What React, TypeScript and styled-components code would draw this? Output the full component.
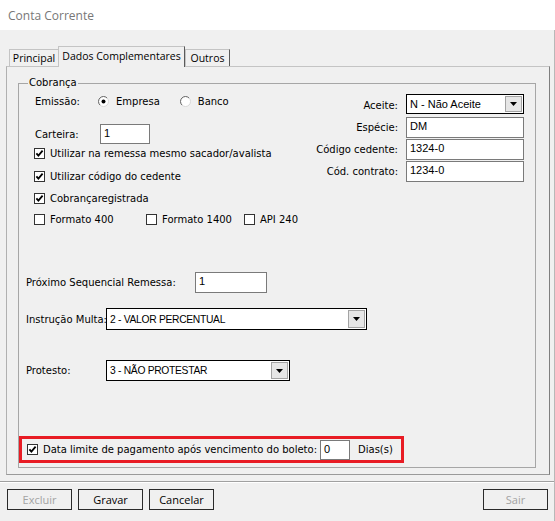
import styled, { createGlobalStyle } from "styled-components";

const GlobalStyle = createGlobalStyle`
  *, *::before, *::after { box-sizing: border-box; }
  html, body { margin: 0; padding: 0; background: #f0f0f0; }
  body {
    font-family: "DejaVu Sans", Tahoma, sans-serif;
    font-size: 10px;
    color: #000;
  }
`;

const Window = styled.div`
  width: 555px;
  height: 521px;
  display: flex;
  flex-direction: column;
  background: #f0f0f0;
  overflow: hidden;
`;

const TitleBar = styled.div`
  height: 30px;
  flex-shrink: 0;
  display: flex;
  align-items: center;
  padding-left: 8px;
  background: #fff;
  color: #777;
  font-family: "Open Sans", "Noto Sans", sans-serif;
  font-size: 12px;
`;

const Body = styled.div`
  flex: 1;
  display: flex;
  flex-direction: column;
  border-right: 1px solid #b8b8b8;
`;

const TabStrip = styled.div`
  display: flex;
  align-items: flex-end;
  height: 20px;
  margin: 16px 0 0 0;
  padding-left: 9px;
`;

const Tab = styled.div<{ $active?: boolean; $width: number; $edge?: boolean }>`
  position: relative;
  z-index: 1;
  width: ${(p) => p.$width}px;
  height: ${(p) => (p.$active ? 21 : 17)}px;
  margin-bottom: ${(p) => (p.$active ? -1 : 0)}px;
  display: flex;
  align-items: ${(p) => (p.$active ? "flex-start" : "center")};
  justify-content: center;
  padding-top: ${(p) => (p.$active ? 2 : 0)}px;
  background: #f0f0f0;
  border: 1px solid #c4c4c4;
  border-bottom: none;
  border-right: ${(p) => (p.$edge ? "1px solid #5a5a5a" : "none")};
  font-family: "Open Sans", "Noto Sans", sans-serif;
  font-size: 10.5px;
  line-height: 15px;
  white-space: nowrap;
`;

const TabPanel = styled.div`
  width: 544px;
  height: 409px;
  margin-left: 6px;
  display: flex;
  flex-direction: column;
  padding: 16px 13px 6px 11px;
  border: 1px solid;
  border-color: #c4c4c4 #7f7f7f #9a9a9a #b0b0b0;
`;

const GroupBox = styled.div`
  position: relative;
  flex: 1;
  display: flex;
  flex-direction: column;
  border: 1px solid #a6a6a6;
`;

const Legend = styled.span`
  position: absolute;
  top: -7px;
  left: 9px;
  padding: 0 1px;
  background: #f0f0f0;
  line-height: 12px;
`;

const TopSection = styled.div`
  display: flex;
  justify-content: space-between;
  padding: 10px 11px 0 15px;
`;

const LeftColumn = styled.div`
  display: flex;
  flex-direction: column;
`;

const Row = styled.div<{ $top?: number; $height: number }>`
  display: flex;
  align-items: center;
  height: ${(p) => p.$height}px;
  margin-top: ${(p) => p.$top ?? 0}px;
`;

const FieldLabel = styled.span<{ $width?: number }>`
  flex-shrink: 0;
  width: ${(p) => (p.$width ? `${p.$width}px` : "auto")};
  padding-left: 1px;
  white-space: nowrap;
`;

const RadioOption = styled.label`
  display: flex;
  align-items: center;
  gap: 7px;
  margin-right: 20px;
`;

const CheckItem = styled.label<{ $width?: number }>`
  display: flex;
  align-items: center;
  gap: 5px;
  width: ${(p) => (p.$width ? `${p.$width}px` : "auto")};
  white-space: nowrap;
`;

const Glyph = styled.svg`
  flex-shrink: 0;
  display: block;
`;

const RightColumn = styled.div`
  display: grid;
  grid-template-columns: auto 118px;
  column-gap: 8px;
  row-gap: 1px;
  align-items: center;
  align-self: flex-start;
`;

const RightLabel = styled.span`
  text-align: right;
  white-space: nowrap;
`;

const TextBox = styled.div<{ $width?: number; $height: number; $left?: number }>`
  width: ${(p) => (p.$width ? `${p.$width}px` : "100%")};
  height: ${(p) => p.$height}px;
  margin-left: ${(p) => p.$left ?? 0}px;
  padding: 2px 2px 0 3px;
  background: #fff;
  border: 1px solid #7a7a7a;
  font-family: "Liberation Sans", Arial, sans-serif;
  font-size: 11px;
  line-height: 13px;
  white-space: nowrap;
`;

const ComboBox = styled.div<{ $width?: number; $height: number; $gapBelow?: number }>`
  display: flex;
  width: ${(p) => (p.$width ? `${p.$width}px` : "100%")};
  height: ${(p) => p.$height}px;
  margin-bottom: ${(p) => p.$gapBelow ?? 0}px;
  background: #fff;
  border: 1px solid #000;
`;

const ComboText = styled.span<{ $compact?: boolean }>`
  flex: 1;
  display: flex;
  align-items: center;
  padding-left: 3px;
  font-family: "Liberation Sans", Arial, sans-serif;
  font-size: ${(p) => (p.$compact ? 10.3 : 11)}px;
  letter-spacing: ${(p) => (p.$compact ? "-0.3px" : "0")};
  white-space: nowrap;
  overflow: hidden;
`;

const ComboButton = styled.span`
  width: 17px;
  margin: 1px;
  display: flex;
  align-items: center;
  justify-content: center;
  background: #e6e6e6;
  border: 1px solid #a3a3a3;
`;

const LowerSection = styled.div`
  display: flex;
  flex-direction: column;
  padding-left: 6px;
`;

const HighlightBox = styled.div`
  align-self: flex-start;
  display: flex;
  align-items: center;
  height: 27px;
  margin-top: 55px;
  padding: 0 8px 0 5px;
  border: 3px solid #e81c24;
`;

const HighlightText = styled.span`
  margin-left: 5px;
  white-space: nowrap;
`;

const DaysLabel = styled.span`
  margin-left: 8px;
`;

const Footer = styled.div`
  display: flex;
  gap: 6px;
  margin-top: 6px;
  padding: 7px 6px 0 7px;
  border-top: 1px solid #a0a0a0;
  box-shadow: inset 0 1px 0 #fff;
`;

const Button = styled.button<{ $push?: boolean }>`
  width: 65px;
  height: 21px;
  margin: 0 0 0 ${(p) => (p.$push ? "auto" : "0")};
  padding: 0;
  background: #f0f0f0;
  border: 1px solid #2a2a2a;
  border-radius: 0;
  color: ${(p) => (p.disabled ? "#a3a3a3" : "#000")};
  font-family: "Open Sans", "Noto Sans", sans-serif;
  font-size: 11px;
`;

const CheckBox = ({ checked }: { checked?: boolean }) => (
  <Glyph width="11" height="11" viewBox="0 0 11 11">
    <rect x="0.5" y="0.5" width="10" height="10" fill="#fff" stroke="#333" />
    {checked && (
      <path d="M2.4 5.3 L4.4 7.6 L8.6 2.6" fill="none" stroke="#000" strokeWidth="1.8" />
    )}
  </Glyph>
);

const Radio = ({ checked }: { checked?: boolean }) => (
  <Glyph width="11" height="11" viewBox="0 0 11 11">
    <circle cx="5.5" cy="5.5" r="5" fill="#fff" stroke="#d8d8d8" />
    <path d="M1.96 9.04 A5 5 0 0 1 9.04 1.96" fill="none" stroke="#6a6a6a" />
    {checked && <circle cx="5.5" cy="5.5" r="2" fill="#000" />}
  </Glyph>
);

const Combo = ({
  value,
  width,
  height,
  compact,
  gapBelow,
}: {
  value: string;
  width?: number;
  height: number;
  compact?: boolean;
  gapBelow?: number;
}) => (
  <ComboBox $width={width} $height={height} $gapBelow={gapBelow}>
    <ComboText $compact={compact}>{value}</ComboText>
    <ComboButton>
      <Glyph width="7" height="4" viewBox="0 0 7 4">
        <path d="M0 0 H7 L3.5 4 Z" fill="#000" />
      </Glyph>
    </ComboButton>
  </ComboBox>
);

const App = () => (
  <>
    <GlobalStyle />
    <Window>
      <TitleBar>Conta Corrente</TitleBar>
      <Body>
        <TabStrip>
          <Tab $width={49}>Principal</Tab>
          <Tab $width={127} $active $edge>
            Dados Complementares
          </Tab>
          <Tab $width={45} $edge>
            Outros
          </Tab>
        </TabStrip>

        <TabPanel>
          <GroupBox>
            <Legend>Cobrança</Legend>

            <TopSection>
              <LeftColumn>
                <Row $height={14}>
                  <FieldLabel $width={64}>Emissão:</FieldLabel>
                  <RadioOption>
                    <Radio checked />
                    Empresa
                  </RadioOption>
                  <RadioOption>
                    <Radio />
                    Banco
                  </RadioOption>
                </Row>
                <Row $top={16} $height={20}>
                  <FieldLabel $width={66}>Carteira:</FieldLabel>
                  <TextBox $width={50} $height={20}>1</TextBox>
                </Row>
                <Row $top={2} $height={14}>
                  <CheckItem>
                    <CheckBox checked />
                    Utilizar na remessa mesmo sacador/avalista
                  </CheckItem>
                </Row>
                <Row $top={9} $height={14}>
                  <CheckItem>
                    <CheckBox checked />
                    Utilizar código do cedente
                  </CheckItem>
                </Row>
                <Row $top={8} $height={14}>
                  <CheckItem>
                    <CheckBox checked />
                    Cobrançaregistrada
                  </CheckItem>
                </Row>
                <Row $top={7} $height={14}>
                  <CheckItem $width={112}>
                    <CheckBox />
                    Formato 400
                  </CheckItem>
                  <CheckItem $width={98}>
                    <CheckBox />
                    Formato 1400
                  </CheckItem>
                  <CheckItem>
                    <CheckBox />
                    API 240
                  </CheckItem>
                </Row>
              </LeftColumn>

              <RightColumn>
                <RightLabel>Aceite:</RightLabel>
                <Combo value="N - Não Aceite" height={20} gapBelow={2} />
                <RightLabel>Espécie:</RightLabel>
                <TextBox $height={21}>DM</TextBox>
                <RightLabel>Código cedente:</RightLabel>
                <TextBox $height={21}>1324-0</TextBox>
                <RightLabel>Cód. contrato:</RightLabel>
                <TextBox $height={21}>1234-0</TextBox>
              </RightColumn>
            </TopSection>

            <LowerSection>
              <Row $top={46} $height={21}>
                <FieldLabel $width={170}>Próximo Sequencial Remessa:</FieldLabel>
                <TextBox $width={72} $height={21}>1</TextBox>
              </Row>
              <Row $top={15} $height={22}>
                <FieldLabel $width={81}>Instrução Multa:</FieldLabel>
                <Combo value="2 - VALOR PERCENTUAL" width={261} height={22} compact />
              </Row>
              <Row $top={30} $height={21}>
                <FieldLabel $width={81}>Protesto:</FieldLabel>
                <Combo value="3 - NÃO PROTESTAR" width={184} height={21} compact />
              </Row>
            </LowerSection>

            <HighlightBox>
              <CheckBox checked />
              <HighlightText>Data limite de pagamento após vencimento do boleto:</HighlightText>
              <TextBox $width={30} $height={20} $left={3}>
                0
              </TextBox>
              <DaysLabel>Dias(s)</DaysLabel>
            </HighlightBox>
          </GroupBox>
        </TabPanel>

        <Footer>
          <Button disabled>Excluir</Button>
          <Button>Gravar</Button>
          <Button>Cancelar</Button>
          <Button $push disabled>
            Sair
          </Button>
        </Footer>
      </Body>
    </Window>
  </>
);

export default App;
